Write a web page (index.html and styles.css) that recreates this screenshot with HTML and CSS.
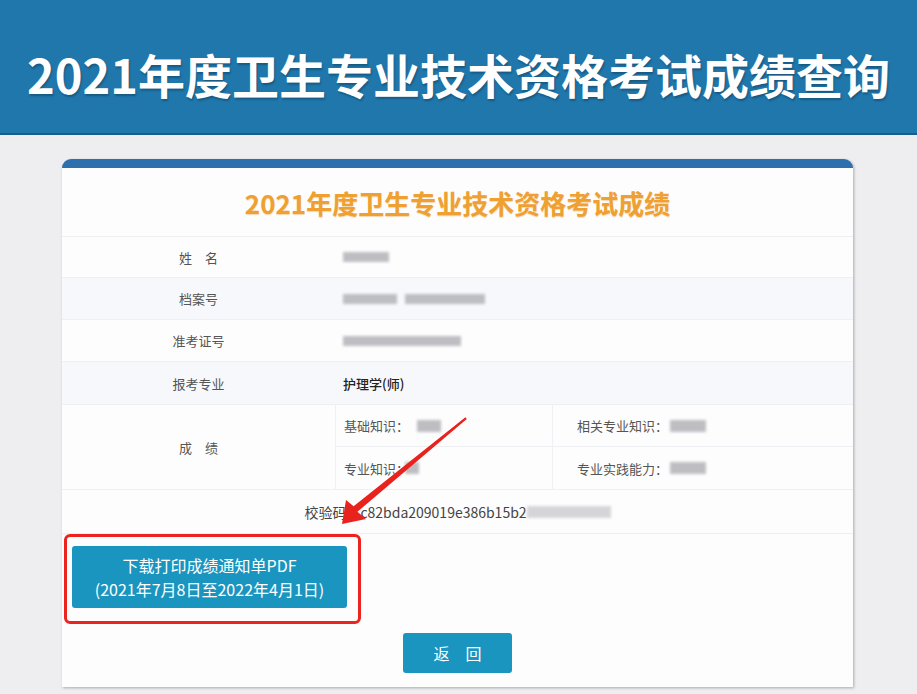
FILE: index.html
```html
<!DOCTYPE html>
<html lang="zh-CN">
<head>
<meta charset="utf-8">
<title>2021年度卫生专业技术资格考试成绩查询</title>
<link rel="stylesheet" href="styles.css">
</head>
<body>
<header class="banner">
  <h1 class="banner-title">2021年度卫生专业技术资格考试成绩查询</h1>
</header>

<main class="card">
  <div class="card-title">2021年度卫生专业技术资格考试成绩</div>

  <div class="info">
    <div class="row row-1">
      <div class="label">姓　名</div>
      <div class="value"><span class="blur blur-name"></span></div>
    </div>
    <div class="row row-2 alt">
      <div class="label">档案号</div>
      <div class="value"><span class="blur blur-file-a"></span><span class="blur blur-file-b"></span></div>
    </div>
    <div class="row row-3">
      <div class="label">准考证号</div>
      <div class="value"><span class="blur blur-ticket"></span></div>
    </div>
    <div class="row row-4 alt">
      <div class="label">报考专业</div>
      <div class="value strong">护理学(师)</div>
    </div>
    <div class="row row-5">
      <div class="label">成　绩</div>
      <div class="scores">
        <div class="score"><span>基础知识：</span><span class="blur blur-score"></span></div>
        <div class="score score-right"><span>相关专业知识：</span><span class="blur blur-score-r"></span></div>
        <div class="score"><span>专业知识：</span><span class="blur blur-score-s"></span></div>
        <div class="score score-right"><span>专业实践能力：</span><span class="blur blur-score-r"></span></div>
      </div>
    </div>
    <div class="row row-6 check">
      <div class="check-text">校验码：c82bda209019e386b15b2<span class="blur blur-check"></span></div>
    </div>
  </div>

  <div class="actions">
    <button class="btn btn-download">下载打印成绩通知单PDF<br>(2021年7月8日至2022年4月1日)</button>
    <button class="btn btn-back">返　回</button>
  </div>

  <div class="highlight"></div>
</main>

<svg class="arrow" viewBox="0 0 917 694" width="917" height="694" aria-hidden="true">
  <polygon points="342,524 346,500 353.6,506.2 465.4,417.2 466.8,418.9 357.4,511.8 366,519" fill="#e8221c"/>
</svg>
</body>
</html>
```

FILE: styles.css
```css
* { box-sizing: border-box; }

html, body {
  margin: 0;
  padding: 0;
}

body {
  position: relative;
  width: 917px;
  height: 694px;
  overflow: hidden;
  background: #eeeef1;
  font-family: "Noto Sans CJK SC", "Noto Sans", sans-serif;
  color: #444;
}

.banner {
  height: 135px;
  background: #1f77ac;
  border-bottom: 2px solid #175f8b;
  display: flex;
  align-items: center;
  justify-content: center;
  padding-top: 13px;
}

.banner-title {
  margin: 0;
  font-size: 47px;
  font-weight: 700;
  color: #fff;
  letter-spacing: 0;
  line-height: 1;
  text-shadow: 1px 2px 2px rgba(0, 0, 0, 0.25);
}

.card {
  position: relative;
  width: 791px;
  margin: 24px 0 0 62px;
  background: #fdfdfe;
  border-top: 9px solid #2e6fae;
  border-radius: 9px 9px 0 0;
  box-shadow: 1px 1px 3px rgba(0, 0, 0, 0.28);
  padding-bottom: 14px;
}

.card-title {
  height: 69px;
  line-height: 70px;
  text-align: center;
  font-size: 26px;
  font-weight: 700;
  color: #efa032;
  text-shadow: 0 1px 1px rgba(230, 140, 20, 0.35);
  border-bottom: 1px solid #eef0f4;
}

.row {
  display: grid;
  grid-template-columns: 273px 1fr;
  align-items: center;
  border-bottom: 1px solid #eef0f4;
  font-size: 13px;
}

.row.alt { background: #f7f8fb; }

.row-1 { height: 41px; }
.row-2 { height: 42px; }
.row-3 { height: 42px; }
.row-4 { height: 43px; }
.row-5 { height: 85px; }
.row-6 { height: 44px; }

.label {
  text-align: center;
  font-size: 13px;
  color: #555;
}

.value {
  padding-left: 8px;
  display: flex;
  align-items: center;
  gap: 10px;
}

.value.strong {
  color: #222;
  font-weight: 500;
}

.blur {
  display: inline-block;
  height: 10px;
  background: #b4b4b8;
  filter: blur(1.5px);
  opacity: 0.85;
}

.blur-name { width: 46px; }
.blur-file-a { width: 54px; }
.blur-file-b { width: 80px; margin-left: -2px; }
.blur-ticket { width: 118px; }
.blur-score { width: 24px; height: 12px; margin-left: 8px; }
.blur-score-s { width: 14px; height: 12px; margin-left: -4px; }
.blur-score-r { width: 36px; height: 12px; margin-left: 2px; }
.blur-check { width: 84px; height: 12px; background: #cfcfd3; }

.scores {
  height: 100%;
  display: grid;
  grid-template-columns: 216px 1fr;
  grid-template-rows: 1fr 1fr;
  border-left: 1px solid #f0f1f4;
}

.score {
  display: flex;
  align-items: center;
  padding-left: 8px;
  color: #555;
}

.score:nth-child(-n+2) { border-bottom: 1px solid #eef0f4; }

.score-right {
  padding-left: 24px;
  border-left: 1px solid #f0f1f4;
}

.check {
  display: flex;
  justify-content: center;
}

.check-text {
  font-size: 14px;
  color: #444;
  display: flex;
  align-items: center;
}

.actions {
  display: flex;
  flex-direction: column;
}

.btn {
  border: 0;
  border-radius: 3px;
  background: #1a95c0;
  color: #fff;
  font-family: inherit;
  cursor: pointer;
  padding: 0;
}

.btn-download {
  width: 275px;
  height: 62px;
  margin: 12px 0 0 10px;
  font-size: 16px;
  line-height: 24px;
}

.btn-back {
  width: 109px;
  height: 40px;
  margin: 25px auto 0;
  font-size: 16px;
}

.highlight {
  position: absolute;
  left: 2px;
  top: 366px;
  width: 297px;
  height: 90px;
  border: 3px solid #ec2420;
  border-radius: 6px;
}

.arrow {
  position: absolute;
  left: 0;
  top: 0;
  pointer-events: none;
}
```
